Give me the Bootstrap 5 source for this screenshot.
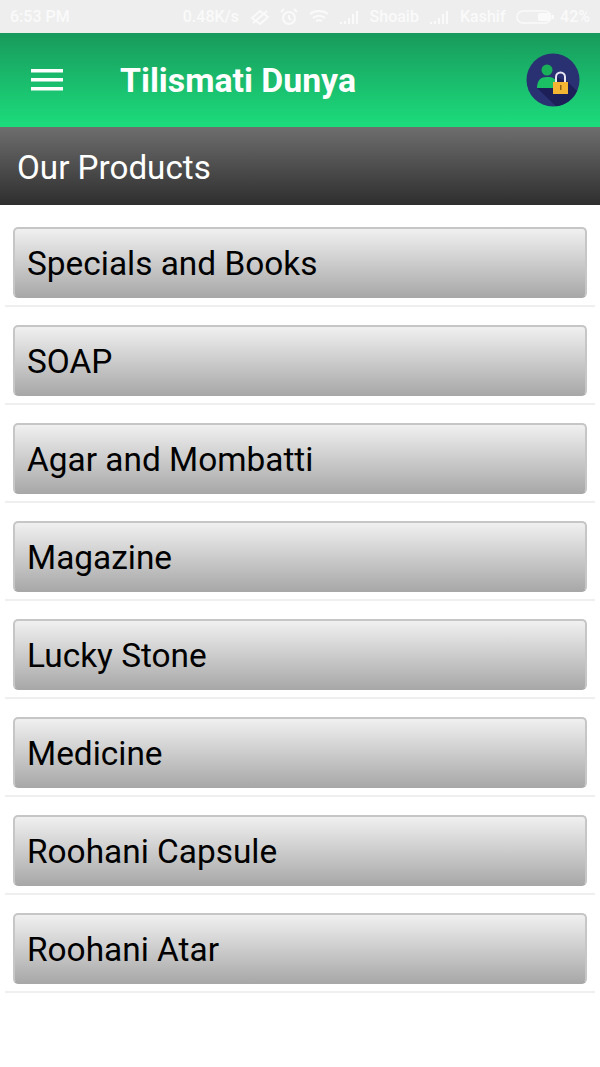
<!DOCTYPE html>
<html lang="en">
<head>
  <meta charset="UTF-8">
  <title>Tilismati Dunya</title>
  <meta name="viewport" content="width=device-width, initial-scale=1">
  <link href="https://cdn.jsdelivr.net/npm/bootstrap@5.3.3/dist/css/bootstrap.min.css" rel="stylesheet">
  <style>
    body { background-color: #fff; font-family: Roboto, "Liberation Sans", sans-serif; height: 1067px; overflow: hidden; }
    .status-bar { height: 33px; background-color: #eee; color: #fafafa; font-size: 16px; font-weight: 500; padding: 0 10px; }
    .status-bar svg { display: block; }
    .status-right { column-gap: 10.5px; }
    .battery-icon { margin-right: -4.5px; }
    .app-bar { height: 94px; background: linear-gradient(#189a5c, #1cdc7c); padding: 0 20px 0 31px; }
    .menu-lines { width: 32px; height: 22px; margin-top: -1px; }
    .app-title { font-size: 33.8px; font-weight: 700; color: #fff; margin: 2px 0 0 57px; line-height: 1; }
    .section-head { height: 78px; background: linear-gradient(#6e6e6e, #2e2e2e); color: #fff; font-size: 33.2px; padding: 4px 0 0 17px; }
    .product-list { padding-top: 22px; }
    .product-row { margin: 0 5px 18px 5px; padding: 0 8px 9px 8px; border-bottom: 2px solid #efefef; height: 80px; }
    .product-btn { height: 71px; width: 100%; border: 2px solid #c6c6c6; border-bottom-color: #a8a8a8; border-radius: 5px; background: linear-gradient(#f0f0f0, #a9a9a9); color: #000; font-size: 33.4px; text-align: left; padding: 3px 0 0 12px; line-height: 1; }
  </style>
</head>
<body>
  <div class="status-bar d-flex align-items-center">
    <span>6:53 PM</span>
    <div class="status-right d-flex align-items-center ms-auto">
      <span>0.48K/s</span>
      <svg width="20" height="18" viewBox="0 0 20 18" fill="none" stroke="#fafafa" stroke-width="2"><path d="M2 10 10 3l8 6-8 7zM3 15 17 3"/></svg>
      <svg width="18" height="18" viewBox="0 0 18 18" fill="none" stroke="#fafafa" stroke-width="2"><circle cx="9" cy="10" r="6"/><path d="M9 7v3l2 2M1 4l3-3M17 4l-3-3"/></svg>
      <svg width="20" height="16" viewBox="0 0 20 16" fill="none" stroke="#fafafa" stroke-width="2"><path d="M1 5c5-4 13-4 18 0M4 9c3-3 9-3 12 0M7 12c2-1 4-1 6 0"/></svg>
      <svg width="20" height="14" viewBox="0 0 20 14" fill="#fafafa"><path d="M1 12h2v2H1zM5 11h2v3H5zM9 8h2v6H9zM13 4h2v10h-2zM17 1h2v13h-2z"/></svg>
      <span>Shoaib</span>
      <svg width="20" height="14" viewBox="0 0 20 14" fill="#fafafa"><path d="M1 12h2v2H1zM5 11h2v3H5zM9 8h2v6H9zM13 4h2v10h-2zM17 1h2v13h-2z"/></svg>
      <span>Kashif</span>
      <svg class="battery-icon" width="38" height="14" viewBox="0 0 38 14"><rect x="1" y="1" width="34" height="12" rx="6" fill="none" stroke="#fafafa" stroke-width="1.5"/><rect x="22" y="3" width="12" height="8" rx="2" fill="#fafafa"/><rect x="36" y="5" width="2" height="4" fill="#fafafa"/></svg>
      <span>42%</span>
    </div>
  </div>

  <nav class="app-bar d-flex align-items-center">
    <svg class="menu-lines" viewBox="0 0 32 22" fill="#fff"><rect y="0" width="32" height="3.5"/><rect y="9" width="32" height="3.5"/><rect y="18" width="32" height="3.5"/></svg>
    <h1 class="app-title">Tilismati Dunya</h1>
    <svg class="ms-auto" width="54" height="54" viewBox="0 0 54 54">
      <circle cx="27" cy="27" r="26.5" fill="#2a3172"/>
      <path d="M11 35 L30 53.3 A26.5 26.5 0 0 0 51 38 L42 29 L30 24Z" fill="#1c1f58"/>
      <circle cx="21" cy="17" r="5.5" fill="#18b058"/>
      <path d="M11 35c0-8 4-11 10-11s9 2 10 5v6z" fill="#1cc064"/>
      <path d="M30 29v-5a4.5 4.5 0 0 1 9 0v5" fill="none" stroke="#e9e6f2" stroke-width="2"/>
      <rect x="27" y="29" width="15" height="12" fill="#f4b632"/>
      <rect x="34" y="32" width="1.5" height="5" fill="#8a6414"/>
    </svg>
  </nav>

  <div class="section-head d-flex align-items-center">Our Products</div>

  <div class="product-list">
    <div class="product-row"><button type="button" class="product-btn">Specials and Books</button></div>
    <div class="product-row"><button type="button" class="product-btn">SOAP</button></div>
    <div class="product-row"><button type="button" class="product-btn">Agar and Mombatti</button></div>
    <div class="product-row"><button type="button" class="product-btn">Magazine</button></div>
    <div class="product-row"><button type="button" class="product-btn">Lucky Stone</button></div>
    <div class="product-row"><button type="button" class="product-btn">Medicine</button></div>
    <div class="product-row"><button type="button" class="product-btn">Roohani Capsule</button></div>
    <div class="product-row"><button type="button" class="product-btn">Roohani Atar</button></div>
  </div>

  <script src="https://cdn.jsdelivr.net/npm/bootstrap@5.3.3/dist/js/bootstrap.bundle.min.js"></script>
</body>
</html>
